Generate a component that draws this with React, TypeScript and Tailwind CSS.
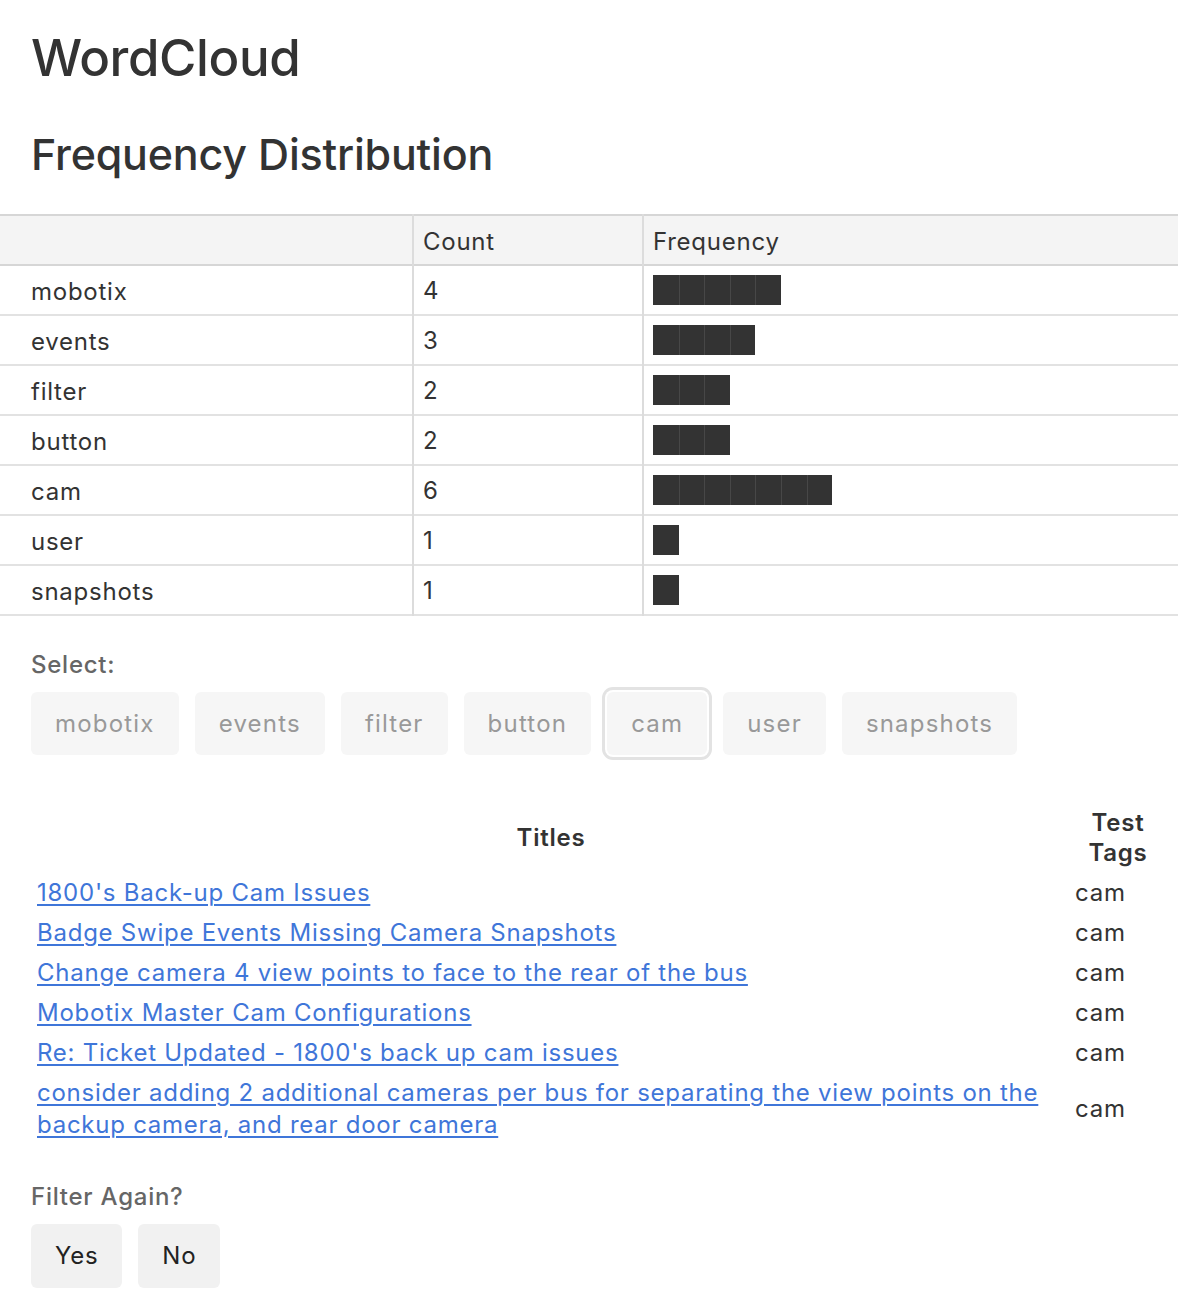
import { useState } from 'react';
import clsx from 'clsx';

const words = [
  { word: 'mobotix', count: 4, blocks: 5 },
  { word: 'events', count: 3, blocks: 4 },
  { word: 'filter', count: 2, blocks: 3 },
  { word: 'button', count: 2, blocks: 3 },
  { word: 'cam', count: 6, blocks: 7 },
  { word: 'user', count: 1, blocks: 1 },
  { word: 'snapshots', count: 1, blocks: 1 },
];

const titles = [
  "1800's Back-up Cam Issues",
  'Badge Swipe Events Missing Camera Snapshots',
  'Change camera 4 view points to face to the rear of the bus',
  'Mobotix Master Cam Configurations',
  "Re: Ticket Updated - 1800's back up cam issues",
  'consider adding 2 additional cameras per bus for separating the view points on the backup camera, and rear door camera',
];

function Bar({ blocks }: { blocks: number }) {
  return (
    <div className="flex h-[30px]">
      {Array.from({ length: blocks }).map((_, i) => (
        <div
          key={i}
          className={clsx('w-[25.6px] h-full bg-[#333]', i > 0 && 'border-l border-[#474747]')}
        />
      ))}
    </div>
  );
}

export default function App() {
  const [selected, setSelected] = useState('cam');

  return (
    <div className="min-h-screen bg-white text-[#333] font-['Inter','Liberation_Sans',sans-serif] text-[24px] leading-[32px] tracking-[0.75px]">
      <div className="px-[31px] pt-[26px]">
        <h1 className="text-[51px] leading-[64px] font-medium tracking-[-0.4px]">WordCloud</h1>
        <h2 className="mt-[36px] text-[43px] leading-[56px] font-medium tracking-[-0.2px]">Frequency Distribution</h2>
      </div>

      <table className="mt-[32px] w-full border-collapse">
        <thead>
          <tr className="bg-[#f4f4f4] border-t-2 border-b-2 border-[#d6d6d6] h-[50px]">
            <th className="w-[413px]" />
            <th className="w-[230px] border-l-2 border-[#dcdcdc] px-[9px] pt-[4px] text-left font-normal">Count</th>
            <th className="border-l-2 border-[#dcdcdc] px-[9px] pt-[4px] text-left font-normal">Frequency</th>
          </tr>
        </thead>
        <tbody>
          {words.map((w) => (
            <tr key={w.word} className="border-b-2 border-[#e2e2e2] h-[50px]">
              <td className="pl-[31px] pt-[4px] align-middle">{w.word}</td>
              <td className="border-l-2 border-[#dcdcdc] px-[9px] align-top pt-[9px]">{w.count}</td>
              <td className="border-l-2 border-[#dcdcdc] px-[9px] align-middle">
                <Bar blocks={w.blocks} />
              </td>
            </tr>
          ))}
        </tbody>
      </table>

      <div className="px-[31px]">
        <p className="mt-[33px] font-medium text-[#666]">Select:</p>
        <div className="mt-[11px] flex gap-4">
          {words.map((w) => (
            <button
              key={w.word}
              type="button"
              onClick={() => setSelected(w.word)}
              className={clsx(
                'h-[63px] px-[24px] rounded-[6px] bg-[#f6f6f6] text-[#999] leading-none tracking-[1.2px]',
                selected === w.word && 'ring-[3px] ring-[#e3e3e3] ring-offset-[2px]'
              )}
            >
              {w.word}
            </button>
          ))}
        </div>

        <table className="mt-[53px] w-[1134px] border-collapse">
          <thead>
            <tr>
              <th className="font-semibold text-center align-middle leading-[30px] pb-[5px]">Titles</th>
              <th className="w-[94px] font-semibold text-center leading-[30px] pb-[5px]">
                Test
                <br />
                Tags
              </th>
            </tr>
          </thead>
          <tbody>
            {titles.map((t) => (
              <tr key={t}>
                <td className="pl-[6px] py-[4px] pr-[20px]">
                  <a href="#" className="text-[#3f76d9] underline underline-offset-[3px] decoration-[2px]">
                    {t}
                  </a>
                </td>
                <td className="pl-[4px] align-middle">cam</td>
              </tr>
            ))}
          </tbody>
        </table>

        <p className="mt-[36px] font-medium text-[#666]">Filter Again?</p>
        <div className="mt-[11px] flex gap-4 pb-[26px]">
          <button type="button" className="h-[64px] px-[24px] rounded-[6px] bg-[#f1f1f1] text-[#222]">
            Yes
          </button>
          <button type="button" className="h-[64px] px-[24px] rounded-[6px] bg-[#f1f1f1] text-[#222]">
            No
          </button>
        </div>
      </div>
    </div>
  );
}
